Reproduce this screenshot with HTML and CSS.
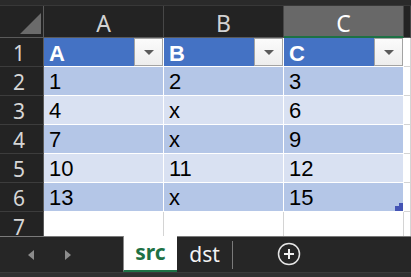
FILE: index.html
```html
<!DOCTYPE html>
<html lang="en">
<head>
    <meta charset="UTF-8">
    <title>src</title>
    <link rel="stylesheet" href="styles.css">
</head>
<body>
    <div class="top-strip"></div>
    <div class="sheet">
        <div class="corner"><svg width="21" height="21" viewBox="0 0 21 21"><polygon points="21,0 21,21 0,21" fill="#6b6b6b"/></svg></div>
        <div class="col-head">A</div>
        <div class="col-head">B</div>
        <div class="col-head selected">C</div>
        <div class="col-head"></div>

        <div class="row-head">1</div>
        <div class="cell th"><span class="val">A</span><span class="filter"></span></div>
        <div class="cell th"><span class="val">B</span><span class="filter"></span></div>
        <div class="cell th"><span class="val">C</span><span class="filter"></span></div>
        <div class="cell blank"></div>

        <div class="row-head">2</div>
        <div class="cell odd"><span class="val">1</span></div>
        <div class="cell odd"><span class="val">2</span></div>
        <div class="cell odd"><span class="val">3</span></div>
        <div class="cell blank"></div>

        <div class="row-head">3</div>
        <div class="cell even"><span class="val">4</span></div>
        <div class="cell even"><span class="val">x</span></div>
        <div class="cell even"><span class="val">6</span></div>
        <div class="cell blank"></div>

        <div class="row-head">4</div>
        <div class="cell odd"><span class="val">7</span></div>
        <div class="cell odd"><span class="val">x</span></div>
        <div class="cell odd"><span class="val">9</span></div>
        <div class="cell blank"></div>

        <div class="row-head">5</div>
        <div class="cell even"><span class="val">10</span></div>
        <div class="cell even"><span class="val">11</span></div>
        <div class="cell even"><span class="val">12</span></div>
        <div class="cell blank"></div>

        <div class="row-head">6</div>
        <div class="cell odd"><span class="val">13</span></div>
        <div class="cell odd"><span class="val">x</span></div>
        <div class="cell odd last"><span class="val">15</span><span class="handle"></span></div>
        <div class="cell blank"></div>

        <div class="row-head">7</div>
        <div class="cell blank"></div>
        <div class="cell blank"></div>
        <div class="cell blank"></div>
        <div class="cell blank"></div>
    </div>
    <div class="tabbar">
        <div class="nav">
            <span class="arrow left"></span>
            <span class="arrow right"></span>
        </div>
        <div class="tab active">src</div>
        <div class="tab">dst</div>
        <div class="add">
            <svg width="24" height="24" viewBox="0 0 24 24">
                <circle cx="12" cy="12" r="10.5" fill="none" stroke="#e6e6e6" stroke-width="1.5"/>
                <path d="M12 7v10M7 12h10" stroke="#f0f0f0" stroke-width="2"/>
            </svg>
        </div>
    </div>
    <div class="bottom-strip"></div>
</body>
</html>
```

FILE: styles.css
```css
body {
    margin: 0;
    width: 411px;
    height: 277px;
    overflow: hidden;
    background: #262626;
    font-family: 'Liberation Sans', Arial, sans-serif;
}
.top-strip {
    height: 5px;
    background: #2a2a2a;
    border-bottom: 1px solid #383838;
}
.sheet {
    display: grid;
    grid-template-columns: 44px 120px 120px 120px 1fr;
    grid-template-rows: 32px repeat(7, 29px);
    height: 230px;
    overflow: hidden;
}
.sheet > div {
    box-sizing: border-box;
    border-right: 1px solid #d4d4d4;
    border-bottom: 1px solid #d4d4d4;
}
.corner {
    background: #232323;
    display: flex;
    justify-content: flex-end;
    align-items: flex-end;
    padding: 0 2px 3px 0;
}
.sheet > .corner {
    border-right-color: #5a5a5a;
    border-bottom-color: #5a5a5a;
}
.sheet > .col-head {
    background: #232323;
    color: #d2d2d2;
    font-family: 'Noto Sans', sans-serif;
    font-size: 23px;
    display: flex;
    justify-content: center;
    align-items: center;
    padding-top: 2px;
    border-right-color: #474747;
    border-bottom-color: #5a5a5a;
}
.sheet > .col-head.selected {
    background: #686868;
    color: #ffffff;
    border-bottom-color: #1e7145;
    box-shadow: inset 0 -1px 0 #1e7145;
}
.sheet > .row-head {
    background: #232323;
    color: #d6d6d6;
    font-family: 'Noto Sans', sans-serif;
    font-size: 21px;
    display: flex;
    justify-content: center;
    align-items: center;
    padding: 2px 5px 0 0;
    border-right-color: #5a5a5a;
    border-bottom-color: #3c3c3c;
}
.cell {
    display: flex;
    align-items: flex-end;
    padding: 0 0 1px 5px;
    font-size: 22px;
    line-height: 22px;
    color: #000;
    position: relative;
}
.sheet > .th,
.sheet > .odd,
.sheet > .even {
    border-color: #ffffff;
}
.th {
    background: #4472c4;
    color: #fff;
    font-weight: bold;
    padding-bottom: 0;
}
.odd {
    background: #b4c6e7;
}
.even {
    background: #d9e1f2;
}
.blank {
    background: #fff;
}
.val {
    padding-bottom: 1px;
}
.filter {
    margin-left: auto;
    align-self: stretch;
    width: 29px;
    box-sizing: border-box;
    border: 1px solid #a3a3a3;
    background: linear-gradient(#fbfbfb, #ededed);
    display: flex;
    justify-content: center;
    align-items: center;
    margin-bottom: 0;
}
.filter::after {
    content: '';
    border-left: 5px solid transparent;
    border-right: 5px solid transparent;
    border-top: 5px solid #5a5a5a;
}
.handle {
    position: absolute;
    right: 0;
    bottom: 0;
    width: 8px;
    height: 5px;
    background: #4454b5;
}
.handle::before {
    content: '';
    position: absolute;
    right: 0;
    top: -3px;
    width: 4px;
    height: 3px;
    background: #4454b5;
}
.tabbar {
    display: flex;
    height: 36px;
    box-sizing: border-box;
    border-top: 1px solid #7a7a7a;
    background: #262626;
    font-family: 'Noto Sans', sans-serif;
}
.nav {
    width: 123px;
    display: flex;
    align-items: center;
    padding-left: 28px;
    box-sizing: border-box;
    gap: 31px;
}
.arrow {
    width: 0;
    height: 0;
    border-top: 5px solid transparent;
    border-bottom: 5px solid transparent;
}
.arrow.left {
    border-right: 6px solid #8c8c8c;
}
.arrow.right {
    border-left: 6px solid #8c8c8c;
}
.tab {
    width: 56px;
    box-sizing: border-box;
    display: flex;
    justify-content: center;
    align-items: center;
    color: #f2f2f2;
    font-size: 21px;
    padding-bottom: 3px;
    border-right: 1px solid #7a7a7a;
    margin: 4px 0 3px;
}
.tab.active {
    width: 54px;
    margin: -1px 0 0;
    background: #fff;
    color: #1e7145;
    font-weight: bold;
    border-left: 1px solid #8a8a8a;
    border-right: none;
    border-bottom: 2px solid #1e7145;
    padding-bottom: 2px;
}
.add {
    width: 112px;
    display: flex;
    justify-content: center;
    align-items: center;
    padding-bottom: 2px;
}
.bottom-strip {
    height: 5px;
    background: #303030;
    border-top: 1px solid #3a3a3a;
}
```
